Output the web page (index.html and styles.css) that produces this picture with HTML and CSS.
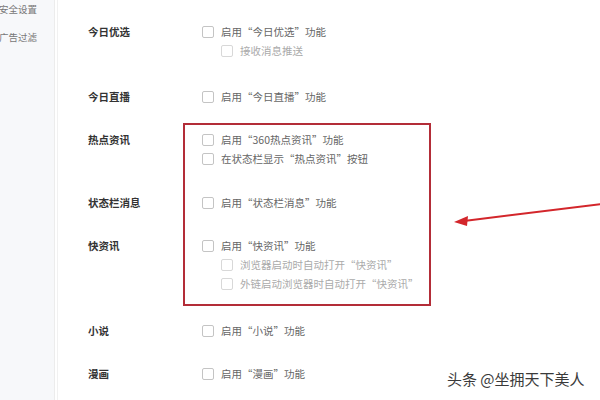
FILE: index.html
```html
<!DOCTYPE html>
<html>
<head>
    <meta charset="utf-8">
    <title>设置</title>
    <link rel="stylesheet" href="styles.css">
</head>
<body>
    <div class="page">
        <div class="sidebar">
            <div class="nav-item">安全设置</div>
            <div class="nav-item">广告过滤</div>
        </div>

        <div class="main">
            <div class="section">
                <div class="label">今日优选</div>
                <div class="options">
                    <div class="option"><span class="box"></span>启用“今日优选”功能</div>
                    <div class="option sub"><span class="box"></span>接收消息推送</div>
                </div>
            </div>

            <div class="section spaced">
                <div class="label">今日直播</div>
                <div class="options">
                    <div class="option"><span class="box"></span>启用“今日直播”功能</div>
                </div>
            </div>

            <div class="section">
                <div class="label">热点资讯</div>
                <div class="options">
                    <div class="option"><span class="box"></span>启用“360热点资讯”功能</div>
                    <div class="option"><span class="box"></span>在状态栏显示“热点资讯”按钮</div>
                </div>
            </div>

            <div class="section nudge">
                <div class="label">状态栏消息</div>
                <div class="options">
                    <div class="option"><span class="box"></span>启用“状态栏消息”功能</div>
                </div>
            </div>

            <div class="section">
                <div class="label">快资讯</div>
                <div class="options">
                    <div class="option"><span class="box"></span>启用“快资讯”功能</div>
                    <div class="option sub"><span class="box"></span>浏览器启动时自动打开“快资讯”</div>
                    <div class="option sub"><span class="box"></span>外链启动浏览器时自动打开“快资讯”</div>
                </div>
            </div>

            <div class="section wide">
                <div class="label">小说</div>
                <div class="options">
                    <div class="option"><span class="box"></span>启用“小说”功能</div>
                </div>
            </div>

            <div class="section">
                <div class="label">漫画</div>
                <div class="options">
                    <div class="option"><span class="box"></span>启用“漫画”功能</div>
                </div>
            </div>
        </div>

        <!-- annotation drawn over the screenshot -->
        <div class="highlight"></div>
        <svg class="arrow" width="600" height="400" viewBox="0 0 600 400">
            <line x1="602" y1="204" x2="464" y2="221" stroke="#d3262b" stroke-width="2"/>
            <polygon points="454,222 468,216 467,226" fill="#d3262b"/>
        </svg>

        <div class="watermark">头条 @坐拥天下美人</div>
    </div>
</body>
</html>
```

FILE: styles.css
```css
body {
    margin: 0;
    padding: 0;
    background: #fff;
    font-family: "Noto Sans CJK SC", "Liberation Sans", sans-serif;
}

.page {
    position: relative;
    width: 600px;
    height: 400px;
    overflow: hidden;
    display: flex;
}

.sidebar {
    width: 54px;
    flex-shrink: 0;
    background: #f7f8fa;
    border-right: 1px solid #ececec;
    padding-top: 1px;
}
.nav-item {
    margin-left: -1px;
    font-size: 9.5px;
    line-height: 16px;
    color: #777;
    margin-bottom: 12px;
    white-space: nowrap;
}

.main {
    flex: 1;
    border-left: 1px solid #f1f1f1;
    margin-left: 2px;
    padding: 22px 0 0 30px;
}

.section {
    display: flex;
    margin-bottom: 24px;
}
.section.spaced { padding-top: 3px; }
.section.nudge { padding-top: 1px; }
.section.wide { padding-top: 4px; }

.label {
    width: 114px;
    flex-shrink: 0;
    font-size: 10.5px;
    line-height: 19px;
    font-weight: bold;
    color: #333;
}

.options {
    display: flex;
    flex-direction: column;
}

.option {
    display: flex;
    align-items: center;
    height: 19px;
    font-size: 10.5px;
    color: #666;
    white-space: nowrap;
}
.option.sub {
    padding-left: 19px;
    color: #aaa;
}

.box {
    width: 10px;
    height: 10px;
    border: 1px solid #c4c4c4;
    border-radius: 2px;
    margin-right: 7px;
    background: #fff;
}
.option.sub .box { border-color: #d8d8d8; }

.highlight {
    position: absolute;
    left: 183px;
    top: 123px;
    width: 244px;
    height: 179px;
    border: 2px solid #b32d38;
}

.arrow {
    position: absolute;
    left: 0;
    top: 0;
}

.watermark {
    position: absolute;
    left: 447px;
    top: 368px;
    font-size: 15px;
    color: #3a3a3a;
    text-shadow: 0 0 2px #fff, 0 0 2px #fff;
    white-space: nowrap;
}
```
